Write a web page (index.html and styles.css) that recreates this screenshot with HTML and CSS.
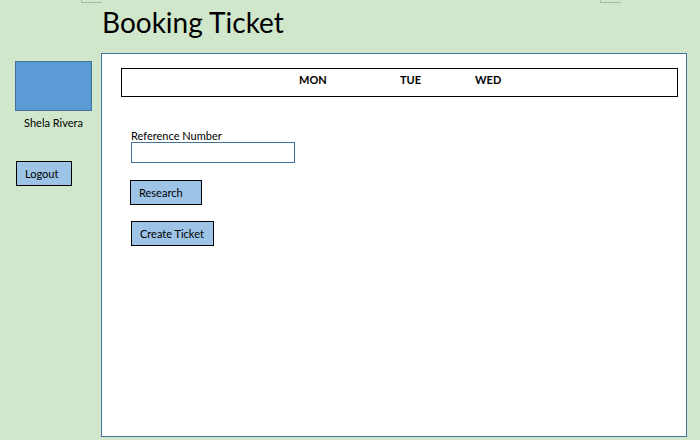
FILE: index.html
```html
<!DOCTYPE html>
<html>
<head>
<meta charset="utf-8">
<link rel="stylesheet" href="styles.css">
</head>
<body>
<div class="page">
  <span class="mark mark-left"></span>
  <span class="mark mark-right"></span>
  <aside class="sidebar">
    <div class="avatar"></div>
    <div class="user-name">Shela Rivera</div>
    <button class="btn btn-logout">Logout</button>
  </aside>
  <main class="content">
    <h1 class="title">Booking Ticket</h1>
    <section class="panel">
      <div class="days">
        <span class="day day-mon">MON</span>
        <span class="day day-tue">TUE</span>
        <span class="day day-wed">WED</span>
      </div>
      <div class="form">
        <label class="field-label">Reference Number</label>
        <input class="field-input" type="text">
        <button class="btn btn-research">Research</button>
        <button class="btn btn-create">Create Ticket</button>
      </div>
    </section>
  </main>
</div>
</body>
</html>
```
FILE: styles.css
```css
* { box-sizing: border-box; }
html, body { margin: 0; padding: 0; }
body {
  width: 700px;
  height: 440px;
  background: #d0e7cc;
  font-family: Lato, "Open Sans", sans-serif;
  color: #000;
  overflow: hidden;
}
.page {
  position: relative;
  display: flex;
  width: 700px;
  height: 440px;
}
.mark {
  position: absolute;
  top: 0;
  width: 21px;
  height: 3px;
  border-bottom: 1px solid #a9b9a6;
}
.mark-left { left: 81px; border-left: 1px solid #a9b9a6; }
.mark-right { left: 600px; border-left: 1px solid #a9b9a6; }

.sidebar {
  width: 101px;
  display: flex;
  flex-direction: column;
  padding-top: 61px;
  padding-left: 15px;
}
.avatar {
  width: 77px;
  height: 50px;
  background: #5b9bd5;
  border: 1px solid #41719c;
}
.user-name {
  width: 77px;
  text-align: center;
  font-size: 11px;
  margin-top: 5px;
  line-height: 14px;
}
.btn {
  font-family: Lato, "Open Sans", sans-serif;
  font-size: 11px;
  background: #9dc3e6;
  border: 1px solid #000;
  color: #000;
  padding: 0;
  height: 25px;
  text-align: left;
  cursor: pointer;
}
.btn-logout {
  margin-top: 31px;
  margin-left: 1px;
  width: 56px;
  height: 25px;
  padding-left: 8px;
}

.content {
  width: 586px;
  display: flex;
  flex-direction: column;
}
.title {
  margin: 0;
  height: 53px;
  font-weight: normal;
  font-size: 28px;
  line-height: 44px;
  padding-left: 1px;
}
.panel {
  width: 586px;
  height: 384px;
  background: #fff;
  border: 1px solid #41719c;
  padding: 14px 8px 0 19px;
}
.days {
  position: relative;
  height: 29px;
  border: 1px solid #000;
  font-weight: bold;
  font-size: 11px;
}
.day {
  position: absolute;
  top: 4px;
}
.day-mon { left: 177px; }
.day-tue { left: 278px; }
.day-wed { left: 353px; }

.form {
  display: flex;
  flex-direction: column;
  align-items: flex-start;
  padding-left: 10px;
  padding-top: 32px;
}
.field-label {
  font-size: 11px;
  line-height: 13px;
}
.field-input {
  width: 164px;
  height: 21px;
  border: 1px solid #41719c;
  margin: 0;
  padding: 0;
  outline: none;
}
.btn-research {
  margin-top: 17px;
  margin-left: -1px;
  width: 72px;
  padding-left: 8px;
}
.btn-create {
  margin-top: 16px;
  width: 83px;
  padding-left: 8px;
}
```
